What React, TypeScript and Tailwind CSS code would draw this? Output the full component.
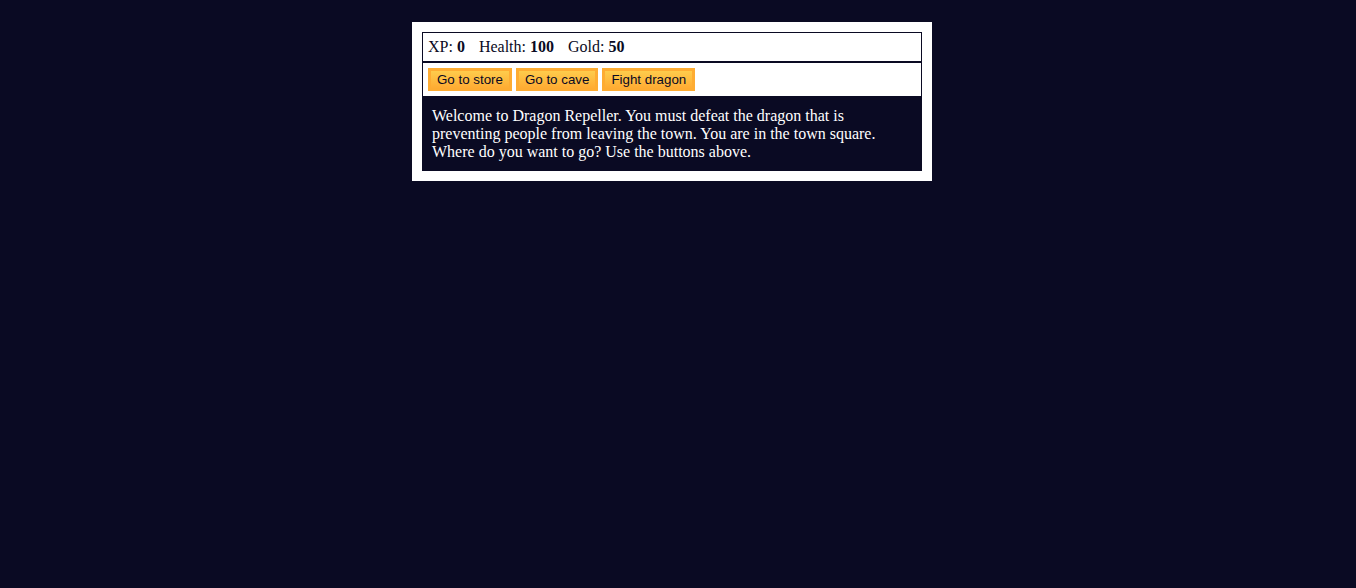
import React from "react";

export default function App() {
  const btn =
    "cursor-pointer text-[#0a0a23] bg-[#feac32] bg-[linear-gradient(#fecc4c,#ffac33)] border-[3px] border-solid border-[#feac32] px-[6px] py-[1px] text-[13.3333px] leading-[normal] font-['Liberation_Sans',Arial,sans-serif]";
  return (
    <div className="min-h-[588px] w-full bg-[#0a0a23] pt-[22px] pr-[12px] font-['Liberation_Serif','Times_New_Roman',serif] text-[16px]">
      <div className="mx-auto max-w-[500px] box-content bg-white p-[10px] text-white">
        <div className="border border-[#0a0a23] p-[5px] text-[#0a0a23] leading-[18px]">
          <span className="pr-[10px]">
            XP: <strong>0</strong>
          </span>{" "}
          <span className="pr-[10px]">
            Health: <strong>100</strong>
          </span>{" "}
          <span className="pr-[10px]">
            Gold: <strong>50</strong>
          </span>
        </div>
        <div className="border border-[#0a0a23] p-[5px] text-[#0a0a23] flex items-start gap-[4px]">
          <button className={btn}>Go to store</button>
          <button className={btn}>Go to cave</button>
          <button className={btn}>Fight dragon</button>
        </div>
        <div className="bg-[#0a0a23] text-white p-[10px] leading-[18px]">
          Welcome to Dragon Repeller. You must defeat the dragon that is
          preventing people from leaving the town. You are in the town square.
          Where do you want to go? Use the buttons above.
        </div>
      </div>
    </div>
  );
}
